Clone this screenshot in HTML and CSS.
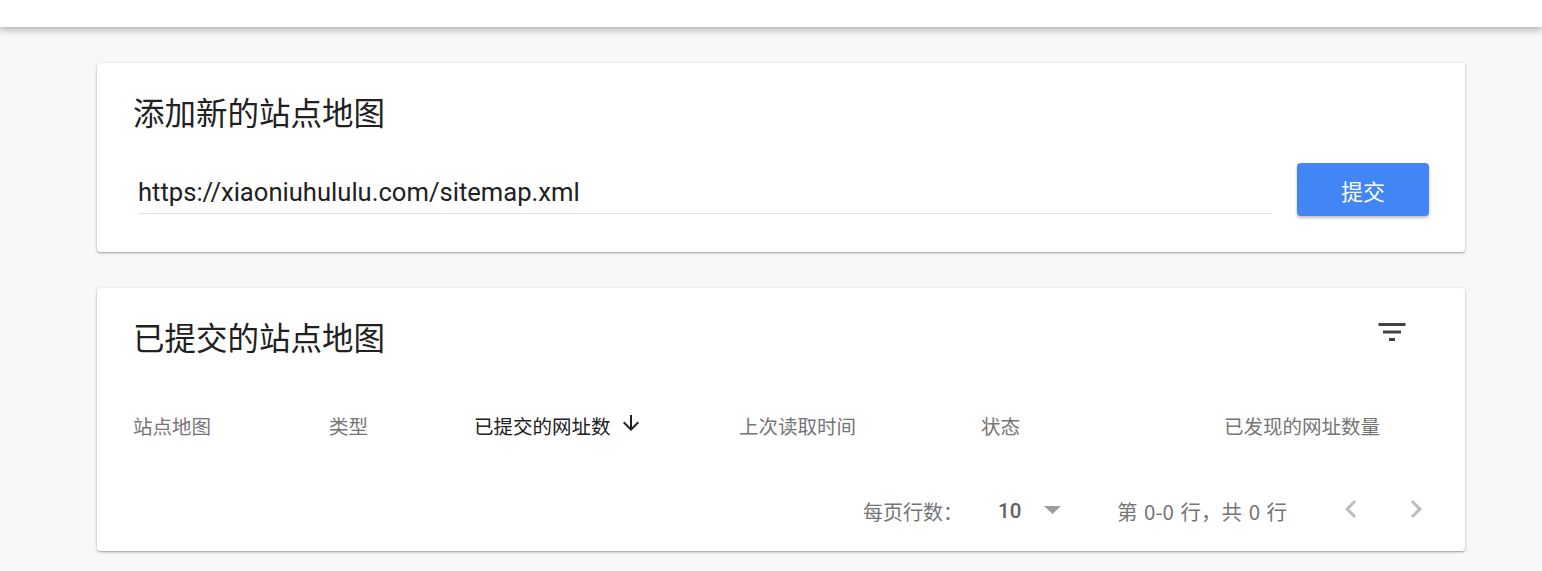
FILE: index.html
```html
<!DOCTYPE html>
<html lang="zh-CN">
<head>
<meta charset="utf-8">
<title>站点地图</title>
<link rel="stylesheet" href="styles.css">
</head>
<body>
<header class="topbar"></header>
<main class="page">
  <section class="card add-card">
    <h2 class="card-title">添加新的站点地图</h2>
    <div class="input-row">
      <div class="field">
        <span class="field-text">https://xiaoniuhululu.com/sitemap.xml</span>
      </div>
      <button class="submit-btn">提交</button>
    </div>
  </section>

  <section class="card list-card">
    <div class="list-head">
      <h2 class="card-title">已提交的站点地图</h2>
      <span class="filter-icon">
        <svg width="36" height="36" viewBox="0 0 24 24"><path d="M10 18h4v-2h-4v2zM3 6v2h18V6H3zm3 7h12v-2H6v2z" fill="#424242"/></svg>
      </span>
    </div>
    <div class="table-head">
      <span class="th">站点地图</span>
      <span class="th">类型</span>
      <span class="th active">已提交的网址数
        <svg class="sort-icon" width="24" height="24" viewBox="0 0 24 24"><path d="M20 12l-1.41-1.41L13 16.17V4h-2v12.17l-5.58-5.59L4 12l8 8 8-8z" fill="#212121"/></svg>
      </span>
      <span class="th">上次读取时间</span>
      <span class="th">状态</span>
      <span class="th">已发现的网址数量</span>
    </div>
    <div class="table-foot">
      <span class="rows-label">每页行数：</span>
      <span class="rows-select">
        <span class="rows-value">10</span>
        <svg class="drop-icon" width="17" height="8" viewBox="0 0 17 8"><path d="M0 0h17L8.5 8z" fill="#9e9e9e"/></svg>
      </span>
      <span class="range">第 0-0 行，共 0 行</span>
      <span class="pager">
        <svg width="36" height="36" viewBox="0 0 24 24"><path d="M15.41 7.41L14 6l-6 6 6 6 1.41-1.41L10.83 12z" fill="#bdbdbd"/></svg>
        <svg width="36" height="36" viewBox="0 0 24 24"><path d="M10 6L8.59 7.41 13.17 12l-4.58 4.59L10 18l6-6z" fill="#bdbdbd"/></svg>
      </span>
    </div>
  </section>
</main>
</body>
</html>
```
FILE: styles.css
```css
html, body {
  margin: 0;
  padding: 0;
}
body {
  background: #f8f8f8;
  font-family: Roboto, "Noto Sans CJK SC", sans-serif;
  color: #212121;
  height: 571px;
  overflow: hidden;
}
.topbar {
  display: block;
  height: 27px;
  background: #fff;
  box-shadow: 0 2px 8px rgba(0, 0, 0, 0.35);
  position: relative;
  z-index: 2;
}
.page {
  padding: 36px 0 0 97px;
  display: flex;
  flex-direction: column;
  gap: 36px;
}
.card {
  width: 1368px;
  box-sizing: border-box;
  background: #fff;
  border-radius: 3px;
  box-shadow: 0 1px 3px rgba(0, 0, 0, 0.3), 0 1px 1px rgba(0, 0, 0, 0.1);
  padding: 0 36px;
}
.card-title {
  margin: 0;
  font-family: "Noto Sans CJK SC", sans-serif;
  font-weight: 400;
  font-size: 31.5px;
  line-height: 40px;
  color: #212121;
}
.add-card {
  height: 189px;
  padding-top: 28px;
}
.input-row {
  display: flex;
  align-items: center;
  margin-top: 30px;
  gap: 25px;
}
.field {
  width: 1134px;
  margin-left: 5px;
  height: 50px;
  border-bottom: 1px solid #e0e0e0;
  box-sizing: border-box;
  display: flex;
  align-items: flex-end;
  padding-bottom: 5px;
}
.field-text {
  font-family: Roboto, sans-serif;
  font-size: 25.6px;
  line-height: 32px;
  color: #212121;
}
.submit-btn {
  width: 132px;
  height: 53px;
  border: none;
  border-radius: 4px;
  background: #4285f4;
  color: #fff;
  font-family: "Noto Sans CJK SC", sans-serif;
  font-size: 22px;
  box-shadow: 0 2px 3px rgba(0, 0, 0, 0.25);
  padding: 0;
  margin-top: 2px;
}
.list-card {
  height: 263px;
  padding-top: 28px;
}
.list-head {
  display: flex;
  justify-content: space-between;
  align-items: flex-start;
}
.filter-icon {
  display: block;
  width: 36px;
  height: 36px;
  margin-top: -2px;
  margin-right: 19px;
}
.filter-icon svg, .pager svg {
  display: block;
}
.table-head {
  display: grid;
  grid-template-columns: 196px 145px 265px 242px 243px auto;
  margin-top: 50px;
  height: 40px;
  align-items: center;
}
.th {
  font-family: "Noto Sans CJK SC", sans-serif;
  font-size: 19.5px;
  line-height: 40px;
  color: #757575;
  display: flex;
  align-items: center;
}
.th.active {
  color: #212121;
}
.sort-icon {
  margin-left: 8px;
  margin-top: -7px;
}
.table-foot {
  display: flex;
  align-items: center;
  margin-top: 45px;
  height: 40px;
  font-family: "Noto Sans CJK SC", sans-serif;
  font-size: 20px;
  color: #757575;
  padding-left: 730px;
  margin-right: -5px;
}
.rows-label {
  width: 135px;
  flex: none;
}
.rows-select {
  display: flex;
  align-items: center;
}
.rows-value {
  font-family: Roboto, sans-serif;
  font-weight: 500;
  font-size: 20.5px;
  color: #616161;
  width: 46px;
}
.drop-icon {
  margin-top: -2px;
}
.range {
  margin-left: 56px;
  font-size: 20.5px;
  word-spacing: 2px;
}
.pager {
  display: flex;
  gap: 29px;
  margin-left: auto;
  margin-top: -4px;
}
```
